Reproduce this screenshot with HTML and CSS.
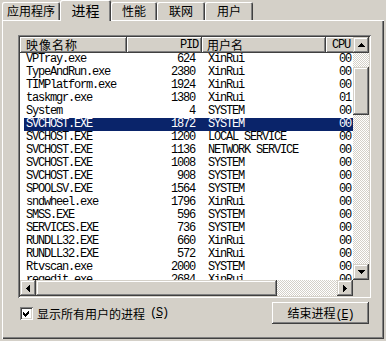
FILE: index.html
```html
<!DOCTYPE html>
<html lang="zh-CN">
<head>
  <title>Windows 任务管理器 — 进程</title>
  <meta charset="utf-8">
  <link rel="stylesheet" href="styles.css">
</head>
<body>
  <div class="taskman">
    <div class="tabs">
      <div class="tabs__tab tabs__tab--apps">应用程序</div>
      <div class="tabs__tab tabs__tab--active">进程</div>
      <div class="tabs__tab tabs__tab--perf">性能</div>
      <div class="tabs__tab tabs__tab--net">联网</div>
      <div class="tabs__tab tabs__tab--users">用户</div>
    </div>

    <div class="panel">
      <div class="list">
        <div class="list__main">
          <div class="list__head">
            <div class="list__col list__col--name">映像名称</div>
            <div class="list__col list__col--pid mono">PID</div>
            <div class="list__col list__col--user">用户名</div>
            <div class="list__col list__col--cpu mono">CPU</div>
          </div>
          <div class="list__rows mono">
            <div class="list__row"><span class="list__cell--name">VPTray.exe</span><span class="list__cell--pid">624</span><span class="list__cell--user">XinRui</span><span class="list__cell--cpu">00</span></div>
            <div class="list__row"><span class="list__cell--name">TypeAndRun.exe</span><span class="list__cell--pid">2380</span><span class="list__cell--user">XinRui</span><span class="list__cell--cpu">00</span></div>
            <div class="list__row"><span class="list__cell--name">TIMPlatform.exe</span><span class="list__cell--pid">1924</span><span class="list__cell--user">XinRui</span><span class="list__cell--cpu">00</span></div>
            <div class="list__row"><span class="list__cell--name">taskmgr.exe</span><span class="list__cell--pid">1380</span><span class="list__cell--user">XinRui</span><span class="list__cell--cpu">01</span></div>
            <div class="list__row"><span class="list__cell--name">System</span><span class="list__cell--pid">4</span><span class="list__cell--user">SYSTEM</span><span class="list__cell--cpu">00</span></div>
            <div class="list__row list__row--selected"><span class="list__cell--name">SVCHOST.EXE</span><span class="list__cell--pid">1872</span><span class="list__cell--user">SYSTEM</span><span class="list__cell--cpu">00</span></div>
            <div class="list__row"><span class="list__cell--name">SVCHOST.EXE</span><span class="list__cell--pid">1200</span><span class="list__cell--user">LOCAL SERVICE</span><span class="list__cell--cpu">00</span></div>
            <div class="list__row"><span class="list__cell--name">SVCHOST.EXE</span><span class="list__cell--pid">1136</span><span class="list__cell--user">NETWORK SERVICE</span><span class="list__cell--cpu">00</span></div>
            <div class="list__row"><span class="list__cell--name">SVCHOST.EXE</span><span class="list__cell--pid">1008</span><span class="list__cell--user">SYSTEM</span><span class="list__cell--cpu">00</span></div>
            <div class="list__row"><span class="list__cell--name">SVCHOST.EXE</span><span class="list__cell--pid">908</span><span class="list__cell--user">SYSTEM</span><span class="list__cell--cpu">00</span></div>
            <div class="list__row"><span class="list__cell--name">SPOOLSV.EXE</span><span class="list__cell--pid">1564</span><span class="list__cell--user">SYSTEM</span><span class="list__cell--cpu">00</span></div>
            <div class="list__row"><span class="list__cell--name">sndwheel.exe</span><span class="list__cell--pid">1796</span><span class="list__cell--user">XinRui</span><span class="list__cell--cpu">00</span></div>
            <div class="list__row"><span class="list__cell--name">SMSS.EXE</span><span class="list__cell--pid">596</span><span class="list__cell--user">SYSTEM</span><span class="list__cell--cpu">00</span></div>
            <div class="list__row"><span class="list__cell--name">SERVICES.EXE</span><span class="list__cell--pid">736</span><span class="list__cell--user">SYSTEM</span><span class="list__cell--cpu">00</span></div>
            <div class="list__row"><span class="list__cell--name">RUNDLL32.EXE</span><span class="list__cell--pid">660</span><span class="list__cell--user">XinRui</span><span class="list__cell--cpu">00</span></div>
            <div class="list__row"><span class="list__cell--name">RUNDLL32.EXE</span><span class="list__cell--pid">572</span><span class="list__cell--user">XinRui</span><span class="list__cell--cpu">00</span></div>
            <div class="list__row"><span class="list__cell--name">Rtvscan.exe</span><span class="list__cell--pid">2000</span><span class="list__cell--user">SYSTEM</span><span class="list__cell--cpu">00</span></div>
            <div class="list__row"><span class="list__cell--name">regedit.exe</span><span class="list__cell--pid">2684</span><span class="list__cell--user">XinRui</span><span class="list__cell--cpu">00</span></div>
          </div>
        </div>

        <div class="vscroll">
          <div class="sbtn">
            <svg width="7" height="4" viewBox="0 0 7 4"><path d="M3 0h1v1h1v1h1v1h1v1H0V3h1V2h1V1h1z"/></svg>
          </div>
          <div class="vscroll__track">
            <div class="vscroll__thumb raised"></div>
          </div>
          <div class="sbtn">
            <svg width="7" height="4" viewBox="0 0 7 4"><path d="M0 0h7v1H6v1H5v1H4v1H3V3H2V2H1V1H0z"/></svg>
          </div>
        </div>

        <div class="hscroll">
          <div class="sbtn">
            <svg width="4" height="7" viewBox="0 0 4 7"><path d="M0 3h1V2h1V1h1V0h1v7H3V6H2V5H1V4H0z"/></svg>
          </div>
          <div class="hscroll__thumb raised"></div>
          <div class="hscroll__track"></div>
          <div class="sbtn">
            <svg width="4" height="7" viewBox="0 0 4 7"><path d="M0 0h1v1h1v1h1v1h1v1H3v1H2v1H1v1H0z"/></svg>
          </div>
        </div>

        <div class="list__corner"></div>
      </div>

      <div class="footer">
        <label class="check">
          <span class="check__box">
            <svg width="9" height="9" viewBox="0 0 9 9"><path d="M7 1v3L3 8 1 6V3l2 2z"/></svg>
          </span>
          显示所有用户的进程<span class="mono check__key">(<u>S</u>)</span>
        </label>
        <button class="button">结束进程<span class="mono">(<u>E</u>)</span></button>
      </div>
    </div>
  </div>
</body>
</html>
```

FILE: styles.css
```css
*, *::before, *::after {
  margin: 0;
  padding: 0;
  box-sizing: border-box;
}

html, body {
  height: 100%;
}

body {
  overflow: hidden;
  background-color: #d4d0c8;
  color: #000000;
  font-family: "Noto Sans CJK SC", "Noto Sans", sans-serif;
  font-size: 12px;
}

.mono {
  font-family: "Liberation Mono", "Noto Sans CJK SC", monospace;
  font-size: 12px;
  letter-spacing: -1.2px;
}

.raised {
  background-color: #d4d0c8;
  box-shadow:
    inset -1px -1px #404040,
    inset 1px 1px #d4d0c8,
    inset -2px -2px #808080,
    inset 2px 2px #ffffff;
}

.taskman {
  width: 386px;
  height: 341px;
}

/* tabs */

.tabs {
  display: flex;
  align-items: flex-start;
  height: 20px;
  padding-left: 2px;
}

.tabs__tab {
  position: relative;
  height: 18px;
  margin-top: 2px;
  border-radius: 2px 2px 0 0;
  background-color: #d4d0c8;
  box-shadow:
    inset 1px 1px #ffffff,
    inset -1px 0 #404040,
    inset -2px 0 #808080;
  line-height: 18px;
  text-align: center;
}

.tabs__tab--apps { width: 58px; }
.tabs__tab--perf { width: 46px; }
.tabs__tab--net { width: 48px; }
.tabs__tab--users { width: 48px; }

.tabs__tab--active {
  z-index: 1;
  width: 51px;
  height: 21px;
  margin-top: 0;
  font-size: 14px;
  line-height: 20px;
}

/* panel */

.panel {
  width: 382px;
  height: 319px;
  margin-left: 2px;
  padding: 15px 11px 0 16px;
  box-shadow:
    inset 1px 1px #ffffff,
    inset -1px -1px #404040,
    inset -2px -2px #808080;
}

.list {
  display: grid;
  grid-template-columns: 333px 16px;
  grid-template-rows: 243px 16px;
  width: 353px;
  height: 263px;
  padding: 2px;
  background-color: #ffffff;
  box-shadow:
    inset 1px 1px #808080,
    inset -1px -1px #ffffff,
    inset 2px 2px #404040,
    inset -2px -2px #d4d0c8;
}

.list__main {
  overflow: hidden;
}

.list__head {
  display: flex;
  height: 16px;
  white-space: nowrap;
}

.list__col {
  flex: none;
  height: 16px;
  overflow: hidden;
  background-color: #d4d0c8;
  box-shadow:
    inset -1px -1px #404040,
    inset 1px 1px #ffffff,
    inset -2px -2px #808080;
  line-height: 16px;
}

.list__col--name {
  width: 107px;
  padding-left: 6px;
  letter-spacing: 1px;
}

.list__col--pid {
  width: 75px;
  padding-right: 4px;
  text-align: right;
}

.list__col--user {
  width: 124px;
  padding-left: 5px;
}

.list__col--cpu {
  width: 29px;
  padding-right: 5px;
  text-align: right;
}

.list__rows {
  white-space: nowrap;
}

.list__row {
  display: flex;
  height: 13px;
  margin-left: 4px;
  line-height: 13px;
}

.list__row > span {
  flex: none;
  overflow: hidden;
}

.list__row--selected {
  background-color: #0a246a;
  color: #ffffff;
}

.list__cell--name {
  width: 103px;
  padding-left: 2px;
}

.list__cell--pid {
  width: 75px;
  padding-right: 7px;
  text-align: right;
}

.list__cell--user {
  width: 124px;
  padding-left: 6px;
}

.list__cell--cpu {
  width: 31px;
  padding-right: 6px;
  text-align: right;
}

/* scrollbars */

.vscroll,
.hscroll {
  display: flex;
  background: repeating-conic-gradient(#ffffff 0 25%, #d4d0c8 0 50%) 0 0 / 2px 2px;
}

.vscroll {
  flex-direction: column;
}

.sbtn {
  display: flex;
  flex: none;
  align-items: center;
  justify-content: center;
  width: 16px;
  height: 16px;
  background-color: #d4d0c8;
  box-shadow:
    inset -1px -1px #404040,
    inset 1px 1px #d4d0c8,
    inset -2px -2px #808080,
    inset 2px 2px #ffffff;
}

.sbtn svg {
  shape-rendering: crispEdges;
  fill: #000000;
}

.vscroll__track {
  flex: 1;
  padding-top: 14px;
}

.vscroll__thumb {
  height: 48px;
}

.hscroll__thumb {
  width: 241px;
}

.hscroll__track {
  flex: 1;
}

.list__corner {
  background-color: #d4d0c8;
}

/* footer */

.footer {
  display: flex;
  align-items: center;
  justify-content: space-between;
  width: 353px;
  height: 22px;
  margin-top: 4px;
  padding: 0 2px;
}

.check {
  display: flex;
  align-items: center;
  gap: 4px;
  white-space: nowrap;
}

.check__box {
  display: flex;
  align-items: center;
  justify-content: center;
  width: 13px;
  height: 13px;
  background-color: #ffffff;
  box-shadow:
    inset 1px 1px #808080,
    inset -1px -1px #ffffff,
    inset 2px 2px #404040,
    inset -2px -2px #d4d0c8;
}

.check__box svg {
  shape-rendering: crispEdges;
  fill: #000000;
}

.check__key {
  margin-left: 1px;
}

.button {
  width: 97px;
  height: 22px;
  border: none;
  background-color: #d4d0c8;
  box-shadow:
    inset -1px -1px #404040,
    inset 1px 1px #ffffff,
    inset -2px -2px #808080,
    inset 2px 2px #d4d0c8;
  color: #000000;
  font: inherit;
  line-height: 22px;
}
```
